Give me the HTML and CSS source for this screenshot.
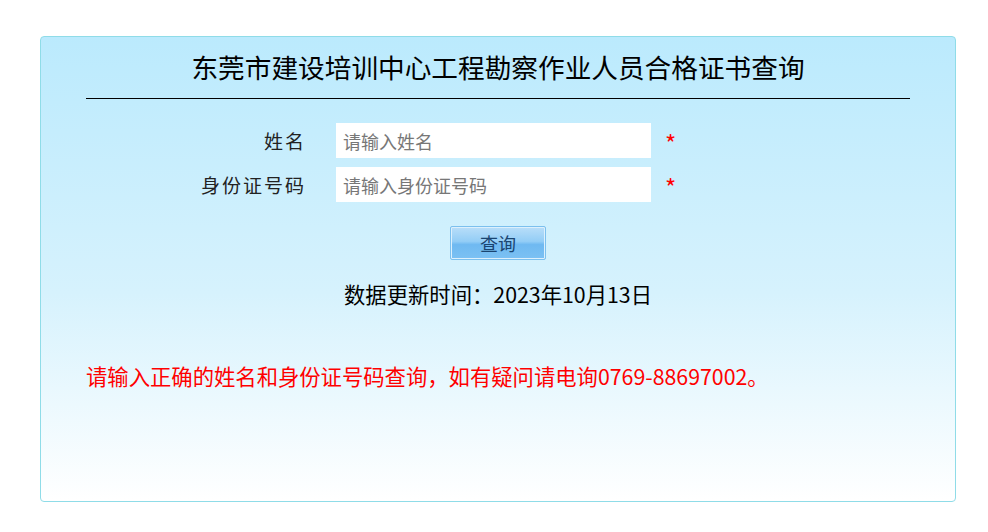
FILE: index.html
```html
<!DOCTYPE html>
<html lang="zh">

<head>
  <meta charset="UTF-8">
  <meta name="viewport" content="width=device-width, initial-scale=1.0">
  <title>证书查询</title>
  <link rel="stylesheet" href="styles.css">
</head>

<body>
  <div class="box">
    <h2 class="title">东莞市建设培训中心工程勘察作业人员合格证书查询</h2>
    <div class="form">
      <label for="name">姓名</label>
      <input type="text" id="name" placeholder="请输入姓名">
      <span class="star">*</span>
      <label for="idno">身份证号码</label>
      <input type="text" id="idno" placeholder="请输入身份证号码">
      <span class="star">*</span>
    </div>
    <div class="actions">
      <button type="button">查询</button>
    </div>
    <p class="update">数据更新时间：2023年10月13日</p>
    <p class="notice">请输入正确的姓名和身份证号码查询，如有疑问请电询0769-88697002。</p>
  </div>
</body>

</html>
```

FILE: styles.css
```css
body {
  margin: 0;
  padding-top: 36px;
  font-family: "Noto Sans CJK SC", "Liberation Sans", sans-serif;
  background: #fff;
}

.box {
  width: 914px;
  height: 464px;
  margin-left: 40px;
  border: 1px solid #8fdce8;
  border-radius: 4px;
  background: linear-gradient(to bottom, #bbeafd 0%, #d6f2fd 55%, #ffffff 100%);
}

.title {
  margin: 12px 45px 0;
  padding-bottom: 13px;
  border-bottom: 1px solid #000;
  font-size: 26.67px;
  font-weight: normal;
  line-height: 36px;
  text-align: center;
  color: #000;
}

.form {
  display: grid;
  grid-template-columns: 295px 315px auto;
  row-gap: 9px;
  align-items: center;
  margin-top: 24px;
}

.form label {
  padding-right: 30px;
  text-align: right;
  font-size: 19px;
  letter-spacing: 2px;
  color: #222;
}

.form input {
  box-sizing: border-box;
  height: 35px;
  padding: 0 7px;
  border: none;
  outline: none;
  background: #fff;
  font-family: inherit;
  font-size: 18px;
}

.form input::placeholder {
  color: #777;
}

.star {
  margin-left: 14px;
  padding-top: 4px;
  color: #f00;
  font-size: 24px;
  line-height: 20px;
}

.actions {
  margin-top: 24px;
  text-align: center;
}

button {
  width: 96px;
  height: 34px;
  border: 1px solid #7cc0ee;
  border-radius: 2px;
  box-shadow: inset 0 0 0 1px #dcf0fd;
  background: linear-gradient(to bottom, #b9def9 0%, #93cdf6 45%, #6fb9f1 55%, #7cc1f3 100%);
  color: #1a4470;
  font-family: inherit;
  font-size: 18px;
  line-height: 30px;
  padding: 0;
}

.update {
  margin: 19px 0 0;
  text-align: center;
  font-size: 21.33px;
  line-height: 30px;
  color: #000;
}

.notice {
  margin: 52px 45px 0;
  font-size: 21.33px;
  line-height: 30px;
  color: #f00;
}
```
